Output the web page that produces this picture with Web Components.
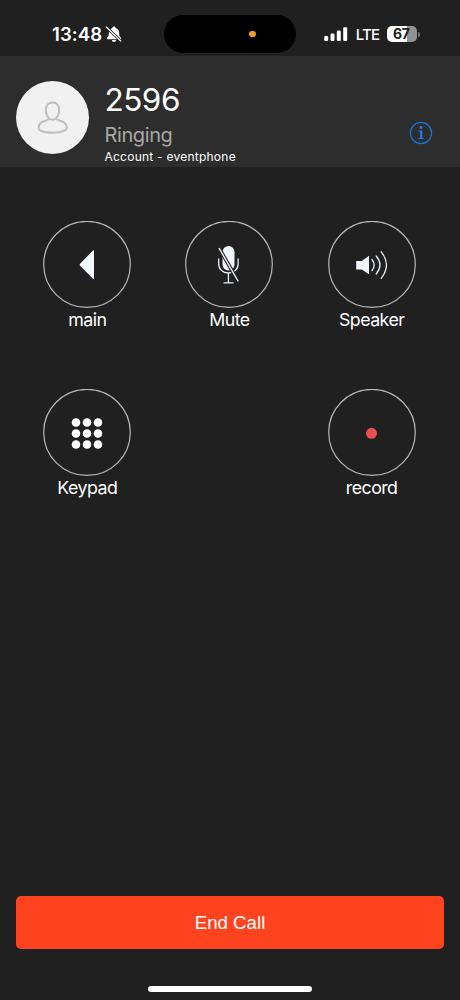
<!DOCTYPE html>
<html lang="en">
<head>
<meta charset="utf-8">
<title>Call</title>
<style>
html,body{margin:0;height:100%;background:#202020;overflow:hidden}
body{font-family:Inter,"Liberation Sans",sans-serif;color:#fff}
</style>
</head>
<body>
<call-screen></call-screen>
<script>
function define(name, html) {
  const t = document.createElement('template');
  t.innerHTML = html;
  customElements.define(name, class extends HTMLElement {
    constructor() {
      super();
      this.attachShadow({mode: 'open'}).appendChild(t.content.cloneNode(true));
    }
  });
}

define('status-bar', `
<style>
:host{display:grid;grid-template-columns:164.300px 131.500px 1fr;height:56px;box-sizing:border-box;padding-top:15px;background:#202020}
.left{display:flex;align-items:center;padding-left:52px;height:38px}
.time{font-size:18.5px;font-weight:600;line-height:22px;letter-spacing:.1px;width:53px;white-space:nowrap}
.island{background:#000;border-radius:19px;height:38px;display:flex;align-items:center;justify-content:flex-end;box-sizing:border-box;padding-right:40px}
.island i{width:6.4px;height:6.4px;border-radius:50%;background:#f79a1c}
.right{display:flex;align-items:center;height:38px;padding-left:28px}
.lte{font-size:15px;line-height:20px;font-weight:500;padding:2px 0 0 8px;box-sizing:border-box;width:39px;white-space:nowrap;letter-spacing:-.8px}
.bat{width:30px;height:16px;border-radius:5px;background:linear-gradient(90deg,#fff 66%,#929292 66%);color:#202020;font-size:14px;font-weight:700;line-height:16px;text-align:center;letter-spacing:-.2px;text-indent:-1px}
.cap{width:2px;height:5px;border-radius:0 2px 2px 0;background:#777;margin-left:1px}
svg{display:block;flex:none}
</style>
<div class="left"><span class="time">13:48</span>
<svg width="17" height="17" viewBox="0 0 17 17"><path d="M9 .6c-.9 0-1.5.6-1.6 1.3-2.2.6-3.5 2.5-3.5 4.8 0 3-.5 3.700-1.700 4.900-.7.8-.4 1.700.6 1.700h12.400c1 0 1.300-.9.6-1.700-1.200-1.200-1.700-1.900-1.700-4.900 0-2.300-1.300-4.200-3.500-4.800C10.500 1.200 9.900.6 9 .6zM6.800 14h4.400c-.2 1.300-1.100 2-2.200 2s-2-.7-2.200-2z" fill="#fff"/><path d="M1.200 1l14.600 14" stroke="#202020" stroke-width="2.800"/><path d="M1.200 1l14.600 14" stroke="#fff" stroke-width="1.100" stroke-linecap="round"/></svg></div>
<div class="island"><i></i></div>
<div class="right"><svg width="24" height="15" viewBox="0 0 24 15" fill="#fff"><rect x="0.200" y="9" width="4" height="5" rx="1.200"/><rect x="6.500" y="6.500" width="4" height="7.500" rx="1.200"/><rect x="12.800" y="3.500" width="4" height="10.500" rx="1.200"/><rect x="19.200" y=".2" width="4" height="13.800" rx="1.200"/></svg>
<span class="lte">LTE</span><span class="bat">67</span><span class="cap"></span></div>`);

define('caller-header', `
<style>
:host{display:flex;height:111px;box-sizing:border-box;padding:25px 27px 0 16px;background:#2d2d2d}
.avatar{width:73px;height:73px;border-radius:50%;background:#f1f1f1;display:flex;flex:none}
.txt{flex:1;padding-left:15.500px;white-space:nowrap}
.num{font-size:31.5px;line-height:38px;height:34px;letter-spacing:-.5px}
.st{font-size:20px;line-height:24px;margin-top:8px;color:#a8a8a8;font-weight:400;letter-spacing:-.4px}
.acc{font-size:12px;line-height:14px;margin-top:3px;letter-spacing:.24px}
.info{margin-top:40px;flex:none}
</style>
<div class="avatar"><svg width="73" height="73" viewBox="0 0 73 73" fill="none" stroke="#bebebe" stroke-width="2"><path d="M36.500 21.500c4.200 0 6.600 3 6.600 7.400 0 3.800-1.500 6.900-3.400 8.800 1.500 1.700 4.500 1.900 7 3 2.800 1.300 4 3.400 4 6.300 0 1-.5 1.900-1.700 2.500-3.300 1.500-7.500 2.300-12.500 2.300s-9.200-.8-12.200-2.300c-1.300-.6-1.600-1.500-1.600-2.500 0-2.900 1.200-5 4-6.300 2.500-1.100 5.200-1.300 6.700-3-2-1.900-3.500-5-3.500-8.800 0-4.400 2.400-7.400 6.600-7.400zM33 37.500c1.800 1.600 5.200 1.600 7 0"/></svg></div>
<div class="txt"><div class="num">2596</div><div class="st">Ringing</div><div class="acc">Account - eventphone</div></div>
<svg class="info" width="24" height="24" viewBox="0 0 24 24"><circle cx="12" cy="12" r="10.600" fill="none" stroke="#1873d6" stroke-width="1.200"/><circle cx="12" cy="6.500" r="1.400" fill="#2080ee"/><path d="M9.600 9.500h3.600v7.600h1.400v.9H9.400v-.9h1.700v-6.700H9.600z" fill="#2080ee"/></svg>`);

define('call-action', `
<style>
:host{display:flex;flex-direction:column;align-items:center}
.ring{width:88px;height:88px;display:grid}
.ring>*{grid-area:1/1}
::slotted(svg){grid-area:1/1;display:block}
.label{font-size:17.800px;line-height:22px;white-space:nowrap;letter-spacing:-.55px}
</style>
<div class="ring"><svg width="88" height="88"><ellipse cx="44" cy="43.400" rx="43.300" ry="43" fill="none" stroke="#b8b8b8" stroke-width="1.200"/></svg><slot></slot></div>
<div class="label"><slot name="label"></slot></div>`);

define('end-button', `
<style>
:host{display:block;padding:0 16px}
button{display:block;width:100%;height:53px;border:0;border-radius:5px;background:#ff431f;color:#fff;padding:0;font:18.700px/53px "Liberation Sans",sans-serif}
</style><button><slot></slot></button>`);

define('call-screen', `
<style>
:host{display:flex;flex-direction:column;width:460px;height:1000px;background:#202020}
.grid{display:grid;grid-template-columns:repeat(3,142.200px);grid-auto-rows:168px;padding:54px 0 0 16.200px;flex:1}
.rec{grid-column:3}
.home{width:164px;height:5.500px;border-radius:3px;background:#fff;margin:37px auto 8.500px;flex:none}
</style>
<status-bar></status-bar>
<caller-header></caller-header>
<div class="grid">
<call-action><svg width="88" height="88"><path d="M51 30v27.500q0 1-1 .2L37.300 45.100q-1.300-1.300 0-2.600L50 29.500q1-.8 1 .5z" fill="#f2f6ff"/></svg><span slot="label">main</span></call-action>
<call-action><svg width="88" height="88" fill="none" stroke="#e8ecf5" stroke-width="1.300"><rect x="37.500" y="25" width="12" height="24.500" rx="6" fill="#f0f4ff" stroke="none"/><path d="M33.700 37.500v5.500c0 5.500 4.200 9 9.700 9s9.700-3.500 9.700-9V37.500M43.400 52V61.500M38.500 61.800h10"/><path d="M34 27L53.300 60.500" stroke="#202020" stroke-width="3.600"/><path d="M34 27L53.300 60.500" stroke-width="1.500"/></svg><span slot="label">Mute</span></call-action>
<call-action><svg width="88" height="88" fill="none" stroke="#e8ecf5" stroke-width="1.300" stroke-linecap="round"><path d="M28.200 40h5.500l7.300-5.300v18.500L33.700 48.500h-5.500z" fill="#f2f6ff" stroke="none"/><path d="M44 38.500q4.300 5.500 0 11M48.200 35q7.500 9 0 18M53.200 30.800q10.500 13 0 26.500"/></svg><span slot="label">Speaker</span></call-action>
<call-action><svg width="88" height="88" fill="#fff"><circle cx="33" cy="33.500" r="4.300"/><circle cx="44" cy="33.500" r="4.300"/><circle cx="55" cy="33.500" r="4.300"/><circle cx="33" cy="44.500" r="4.300"/><circle cx="44" cy="44.500" r="4.300"/><circle cx="55" cy="44.500" r="4.300"/><circle cx="33" cy="55.500" r="4.300"/><circle cx="44" cy="55.500" r="4.300"/><circle cx="55" cy="55.500" r="4.300"/></svg><span slot="label">Keypad</span></call-action>
<call-action class="rec"><svg width="88" height="88"><circle cx="43.500" cy="44.300" r="5.500" fill="#ea4e50"/></svg><span slot="label">record</span></call-action>
</div>
<end-button>End Call</end-button>
<div class="home"></div>`);
</script>
</body>
</html>
